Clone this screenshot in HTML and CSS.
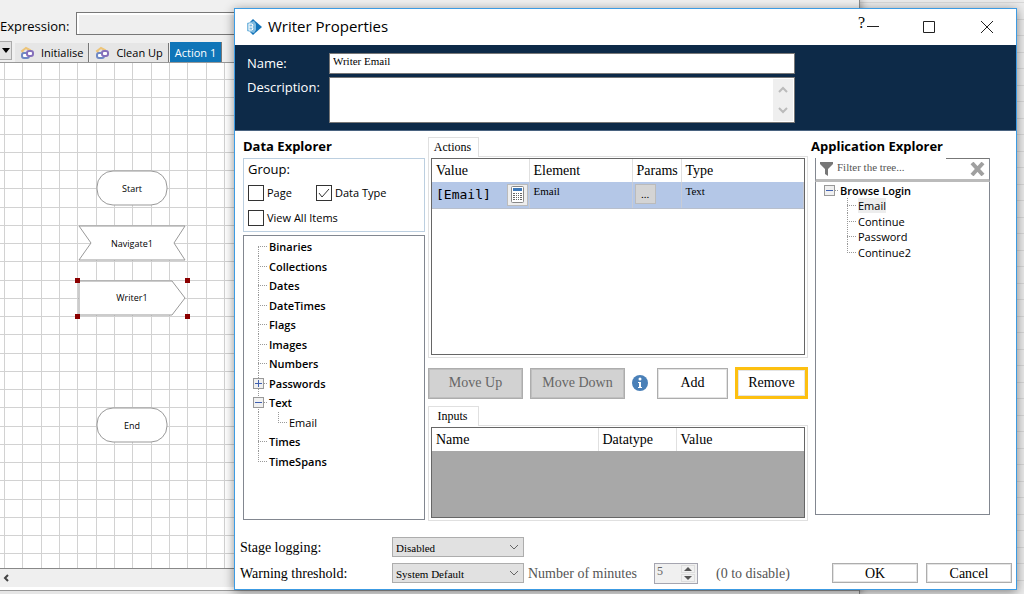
FILE: index.html
```html
<!DOCTYPE html>
<html lang="en">
<head>
  <meta charset="utf-8">
  <title>Writer Properties</title>
  <link rel="stylesheet" href="styles.css">
</head>
<body>
  <!-- Process studio behind the dialog -->
  <main class="studio">
    <div class="expression-bar">
      <label for="expression">Expression:</label>
      <input type="text" id="expression">
    </div>

    <div class="page-tabs">
      <button class="page-menu" aria-label="Pages"><svg width="8" height="5"><path d="M0 0h8L4 5z"/></svg></button>
      <button class="page-tab">
        <svg class="page-icon" width="15" height="14" viewBox="0 0 15 14" fill="none">
          <path d="M2 5l4-3 4 2-1 4-4 1z" stroke="#edc478" stroke-width="2"/>
          <rect x="2" y="7" width="7" height="5" rx="2" fill="#fff" stroke="#6f88c4" stroke-width="2"/>
          <rect x="7" y="5" width="6" height="5" rx="2" fill="#fff" stroke="#8570bb" stroke-width="2"/>
        </svg>
        Initialise
      </button>
      <button class="page-tab">
        <svg class="page-icon" width="15" height="14" viewBox="0 0 15 14" fill="none">
          <path d="M2 5l4-3 4 2-1 4-4 1z" stroke="#edc478" stroke-width="2"/>
          <rect x="2" y="7" width="7" height="5" rx="2" fill="#fff" stroke="#6f88c4" stroke-width="2"/>
          <rect x="7" y="5" width="6" height="5" rx="2" fill="#fff" stroke="#8570bb" stroke-width="2"/>
        </svg>
        Clean Up
      </button>
      <button class="page-tab active">Action 1</button>
    </div>

    <div class="canvas">
      <svg class="diagram" width="100%" height="100%">
        <defs>
          <pattern id="gridX" x="4" y="0" width="55" height="73" patternUnits="userSpaceOnUse">
            <path d="M0 0h1v73h-1zM18 0h1v73h-1zM37 0h1v73h-1z" fill="#d2d2d2"/>
          </pattern>
          <pattern id="gridY" x="0" y="16" width="55" height="73" patternUnits="userSpaceOnUse">
            <path d="M0 0h55v1h-55zM0 18h55v1h-55zM0 36h55v1h-55zM0 55h55v1h-55z" fill="#d2d2d2"/>
          </pattern>
        </defs>
        <rect width="100%" height="100%" fill="url(#gridX)"/>
        <rect width="100%" height="100%" fill="url(#gridY)"/>
        <g class="stage">
          <rect x="97" y="108" width="70" height="34" rx="16"/>
          <text x="132" y="129">Start</text>
        </g>
        <g class="stage">
          <path d="M79 163h106l-11 17 11 17H79l12-17z"/>
          <text x="132" y="184">Navigate1</text>
        </g>
        <g class="stage">
          <path d="M79 218h93l13 17-13 17H79z"/>
          <text x="132" y="238">Writer1</text>
        </g>
        <path class="handles" d="M75 215h5v5h-5zM185 215h5v5h-5zM75 251h5v5h-5zM185 251h5v5h-5z"/>
        <g class="stage">
          <rect x="97" y="345" width="70" height="34" rx="16"/>
          <text x="132" y="366">End</text>
        </g>
      </svg>
    </div>

    <div class="canvas-scroll">
      <button aria-label="Scroll left"><svg width="8" height="8" fill="none"><path d="M6 1L3 4l3 3" stroke="#444" stroke-width="2"/></svg></button>
    </div>
  </main>

  <section class="dialog" role="dialog" aria-labelledby="dialogTitle">
    <header class="title-bar">
      <svg class="app-icon" width="16" height="16" viewBox="0 0 16 16">
        <path d="M7 0l9 8-9 8-3-3V3z" fill="#1273b9"/>
        <path d="M1 4l7-2 2 3v6l-2 3-7-2z" fill="#7fbbe0"/>
        <path d="M3 5h3l1 1-1 2 1 2-1 1H3zM3 8h3" fill="none" stroke="#fff"/>
      </svg>
      <h1 id="dialogTitle">Writer Properties</h1>
      <button class="help-btn" aria-label="Help">?</button>
      <button class="window-btn minimise" aria-label="Minimise"><svg width="12" height="12"><path d="M0 5.5h12" /></svg></button>
      <button class="window-btn" aria-label="Maximise"><svg width="12" height="12"><path d="M.5.5h11v11H.5z"/></svg></button>
      <button class="window-btn" aria-label="Close"><svg width="12" height="12"><path d="M0 0l12 12M12 0L0 12"/></svg></button>
    </header>

    <div class="details">
      <label for="stageName">Name:</label>
      <input type="text" id="stageName" value="Writer Email">
      <label for="stageDesc">Description:</label>
      <div class="desc-box">
        <textarea id="stageDesc"></textarea>
        <div class="desc-scroll">
          <svg width="10" height="7"><path d="M1 6l4-4 4 4"/></svg>
          <svg width="10" height="7"><path d="M1 1l4 4 4-4"/></svg>
        </div>
      </div>
    </div>

    <div class="panels">
      <div class="data-explorer">
        <h2>Data Explorer</h2>
        <div class="group-box">
          <div class="group-title">Group:</div>
          <div class="group-row">
            <label class="page-check"><input type="checkbox">Page</label>
            <label><input type="checkbox" checked>Data Type</label>
          </div>
          <div class="group-row">
            <label><input type="checkbox">View All Items</label>
          </div>
        </div>
        <ul class="tree data-tree">
          <li><span class="branch first"></span>Binaries</li>
          <li><span class="branch"></span>Collections</li>
          <li><span class="branch"></span>Dates</li>
          <li><span class="branch"></span>DateTimes</li>
          <li><span class="branch"></span>Flags</li>
          <li><span class="branch"></span>Images</li>
          <li><span class="branch"></span>Numbers</li>
          <li><span class="branch"><button class="toggle plus" aria-label="Expand"></button></span>Passwords</li>
          <li><span class="branch"><button class="toggle" aria-label="Collapse"></button></span>Text</li>
          <li class="leaf"><span class="branch line"></span><span class="branch last"></span>Email</li>
          <li><span class="branch"></span>Times</li>
          <li><span class="branch last"></span>TimeSpans</li>
        </ul>
      </div>

      <div class="stage-panel">
        <button class="panel-tab">Actions</button>
        <div class="tab-body actions-body">
          <div class="grid-box">
            <table class="actions">
              <thead>
                <tr><th class="col-value">Value</th><th class="col-element">Element</th><th class="col-params">Params</th><th>Type</th></tr>
              </thead>
              <tbody>
                <tr>
                  <td>
                    <div class="value-cell">
                      <code>[Email]</code>
                      <button class="calc-btn" aria-label="Expression editor">
                        <svg width="13" height="17" viewBox="0 0 13 17">
                          <rect x=".5" y=".5" width="12" height="16" rx="1" fill="#fff" stroke="#888"/>
                          <path d="M2 2h9v3H2z" fill="#3d78b8"/>
                          <path d="M2 7h2v1H2zM5 7h1v1H5zM7 7h1v1H7zM9 7h2v1H9zM2 9h2v1H2zM5 9h1v1H5zM7 9h1v1H7zM9 9h2v1H9zM2 11h2v1H2zM5 11h1v1H5zM7 11h1v1H7zM9 11h2v1H9zM2 13h2v1H2zM5 13h1v1H5zM7 13h1v1H7zM9 13h2v1H9z" fill="#666"/>
                        </svg>
                      </button>
                    </div>
                  </td>
                  <td>Email</td>
                  <td class="params-cell"><button class="params-btn" aria-label="Edit params">...</button></td>
                  <td>Text</td>
                </tr>
              </tbody>
            </table>
          </div>
        </div>

        <div class="action-buttons">
          <button class="btn btn-wide" disabled>Move Up</button>
          <button class="btn btn-wide" disabled>Move Down</button>
          <svg class="info-icon" width="16" height="16" viewBox="0 0 16 16">
            <circle cx="8" cy="8" r="8" fill="#4a80b8"/>
            <circle cx="8" cy="4" r="1.5" fill="#fff"/>
            <path d="M6 7h3v5h1v1H6v-1h1V8H6z" fill="#fff"/>
          </svg>
          <button class="btn btn-add">Add</button>
          <button class="btn btn-remove">Remove</button>
        </div>

        <button class="panel-tab">Inputs</button>
        <div class="tab-body inputs-body">
          <div class="grid-box empty">
            <table class="inputs">
              <thead>
                <tr><th class="col-name">Name</th><th class="col-datatype">Datatype</th><th>Value</th></tr>
              </thead>
            </table>
          </div>
        </div>
      </div>

      <div class="app-explorer">
        <h2>Application Explorer</h2>
        <div class="filter">
          <svg width="13" height="14"><path d="M0 0h13v2L8 7v7l-3-2V7L0 2z" fill="#777"/></svg>
          <input type="text" placeholder="Filter the tree..." aria-label="Filter the tree">
          <button aria-label="Clear filter"><svg width="15" height="14"><path d="M2 1l11 12M13 1L2 13" stroke="#a0a0a0" stroke-width="4"/></svg></button>
        </div>
        <ul class="tree app-tree">
          <li><span class="branch root"><button class="toggle" aria-label="Collapse"></button></span>Browse Login</li>
          <li class="leaf"><span class="branch"></span><span class="selected">Email</span></li>
          <li class="leaf"><span class="branch"></span>Continue</li>
          <li class="leaf"><span class="branch"></span>Password</li>
          <li class="leaf"><span class="branch last"></span>Continue2</li>
        </ul>
      </div>
    </div>

    <footer class="settings">
      <div class="setting-row">
        <label class="setting-label" for="logging">Stage logging:</label>
        <select id="logging"><option>Disabled</option></select>
      </div>
      <div class="setting-row">
        <label class="setting-label" for="threshold">Warning threshold:</label>
        <select id="threshold"><option>System Default</option></select>
        <label class="minutes-label" for="minutes">Number of minutes</label>
        <div class="spinner">
          <input type="number" id="minutes" value="5" disabled>
          <div class="spinner-buttons">
            <button aria-label="More" disabled><svg width="8" height="4"><path d="M0 4h8L4 0z"/></svg></button>
            <button aria-label="Less" disabled><svg width="8" height="4"><path d="M0 0h8L4 4z"/></svg></button>
          </div>
        </div>
        <span class="minutes-hint">(0 to disable)</span>
        <div class="dialog-buttons">
          <button class="btn btn-dialog">OK</button>
          <button class="btn btn-dialog">Cancel</button>
        </div>
      </div>
    </footer>
  </section>
</body>
</html>
```

FILE: styles.css
```css
:root {
  --navy: #0d2a48;
  --accent: #0f75b8;
  --window-border: #3c9be3;
  --line: #828790;
  --soft-line: #e0e0e0;
  --sans: "Open Sans", "Noto Sans", sans-serif;
  --serif: "Liberation Serif", serif;
}

* {
  box-sizing: border-box;
}

body {
  margin: 0;
  height: 100vh;
  overflow: hidden;
  font-family: var(--sans);
  color: #000;
  background: repeating-linear-gradient(to bottom, #ececec 0 2px, #d8d8d8 2px 3px, #ececec 3px 19px, #d8d8d8 19px 20px, #ececec 20px 33px);
}

button,
input,
select,
textarea {
  font: inherit;
  color: inherit;
  margin: 0;
  padding: 0;
  border: 0;
  border-radius: 0;
  background: none;
  outline: none;
}

button svg {
  display: block;
}

/* process studio */

.studio {
  display: flex;
  flex-direction: column;
  width: 84%;
  height: 100%;
  padding-top: 12px;
  background: #f0f0f0;
  border-right: 1px solid #8a8a8a;
  box-shadow: 1px 0 8px rgba(0, 0, 0, 0.4);
}

.expression-bar {
  display: flex;
  align-items: center;
  gap: 5px;
  height: 22px;
  font-size: 14px;
}

.expression-bar label {
  width: 71px;
  padding-top: 6px;
  font-size: 13px;
}

.expression-bar input {
  flex: 1;
  height: 23px;
  background: #efefef;
  border: 1px solid #777;
  box-shadow: inset 2px 2px 0 #fff;
}

.page-tabs {
  display: flex;
  align-items: flex-end;
  margin-top: 7px;
  height: 22px;
  border-bottom: 1px solid #999;
  font-size: 11px;
}

.page-menu {
  display: flex;
  align-items: center;
  justify-content: center;
  align-self: flex-start;
  width: 12px;
  height: 19px;
  margin-right: 3px;
  background: #e2e2e2;
  border: 1px solid #aaa;
  border-left: 0;
}

.page-tab {
  display: flex;
  align-items: center;
  gap: 6px;
  height: 19px;
  padding: 0 5px;
  background: #e6e6e6;
  border-right: 1px solid #777;
  margin-right: 1px;
}

.page-tab.active {
  height: 20px;
  background: var(--accent);
  color: #fff;
}

.canvas {
  flex: 1;
  min-height: 0;
  background: #fff;
}

.diagram {
  display: block;
}

.stage rect,
.stage path {
  fill: #fff;
  stroke: #999;
}

.stage text {
  font-size: 9px;
  text-anchor: middle;
}

.handles {
  fill: #8b0000;
}

.canvas-scroll {
  display: flex;
  align-items: center;
  height: 26px;
  padding: 0 2px 8px;
  background: linear-gradient(#efefef 18px, #fff 18px 21px, #999 21px 22px, #e6e6e6 22px);
  border-top: 1px solid #888;
}

/* dialog window */

.dialog {
  position: absolute;
  inset: 8px 7px 4px 234px;
  display: flex;
  flex-direction: column;
  background: #fff;
  border: 1px solid var(--window-border);
  box-shadow: 0 2px 10px rgba(0, 0, 0, 0.45);
}

.title-bar {
  display: flex;
  align-items: center;
  height: 36px;
  padding-left: 11px;
}

.title-bar h1 {
  flex: 1;
  margin: 0 0 0 6px;
  font-size: 15px;
  font-weight: 400;
  line-height: 34px;
  align-self: flex-start;
}

.help-btn {
  align-self: flex-start;
  padding-top: 4px;
  font: 16px/20px var(--serif);
}

.window-btn {
  display: flex;
  justify-content: center;
  width: 58px;
}

.window-btn.minimise {
  justify-content: flex-start;
  width: 35px;
  padding-left: 2px;
}

.window-btn path {
  fill: none;
  stroke: #222;
}

.details {
  display: grid;
  grid-template-columns: 78px 1fr;
  gap: 3px 4px;
  padding: 8px 221px 7px 12px;
  background: var(--navy);
  border-bottom: 1px solid #4a6380;
  font-size: 13px;
}

.details label {
  color: #fff;
  line-height: 21px;
}

.details input {
  height: 21px;
  padding: 0 3px 5px;
  background: #fff;
  border: 1px solid #777;
  color: #000;
  font: 11px/15px var(--serif);
}

.desc-box {
  display: flex;
  height: 46px;
  background: #fff;
  border: 1px solid #777;
}

.desc-box textarea {
  flex: 1;
  resize: none;
}

.desc-scroll {
  display: flex;
  flex-direction: column;
  align-items: center;
  justify-content: space-between;
  width: 20px;
  margin: 1px;
  padding: 7px 0;
  background: #efefef;
}

.desc-scroll path {
  fill: none;
  stroke: #bbb;
  stroke-width: 2;
}

.panels {
  flex: 1;
  min-height: 0;
  display: grid;
  grid-template-columns: 182px 1fr 179px;
  column-gap: 3px;
  padding: 6px 26px 0 8px;
}

h2 {
  margin: 0;
  height: 21px;
  font-size: 13px;
  font-weight: 700;
  line-height: 19px;
  white-space: nowrap;
}

.data-explorer,
.stage-panel,
.app-explorer {
  display: flex;
  flex-direction: column;
  min-width: 0;
}

.group-box {
  height: 74px;
  padding: 0 4px;
  border: 1px solid #bccfe0;
  font-size: 11px;
}

.group-title {
  height: 21px;
  font-size: 13px;
  line-height: 20px;
}

.group-row {
  display: flex;
  height: 25px;
}

.group-row label {
  display: flex;
  align-items: center;
  gap: 3px;
}

.page-check {
  width: 68px;
}

input[type="checkbox"] {
  appearance: none;
  width: 16px;
  height: 16px;
  border: 1px solid #333;
  background: #fff;
}

input[type="checkbox"]:checked {
  background: url("data:image/svg+xml,%3Csvg xmlns='http://www.w3.org/2000/svg' viewBox='0 0 14 14'%3E%3Cpath d='M2 7l3 4 7-8' fill='none' stroke='%23333'/%3E%3C/svg%3E") center / 14px no-repeat;
}

/* trees */

.tree {
  margin: 0;
  padding: 0;
  list-style: none;
  font-size: 11px;
  font-weight: 600;
  background: #fff;
  border: 1px solid var(--line);
}

.tree li {
  display: flex;
  align-items: center;
}

.tree .leaf {
  font-weight: 400;
}

.data-tree {
  height: 285px;
  margin-top: 3px;
  padding: 1px 0 0 9px;
}

.data-tree li {
  height: 19px;
}

.data-tree li:nth-child(even) {
  height: 20px;
}

.app-tree {
  flex: 1;
  margin: 0 0 19px 4px;
  padding: 0 0 0 8px;
  border-top: 0;
}

.app-tree li {
  height: 16px;
}

.app-tree li:nth-child(even) {
  height: 15px;
}

.app-tree .leaf {
  padding-left: 18px;
}

.branch {
  display: flex;
  align-items: center;
  align-self: stretch;
  width: 16px;
  background:
    repeating-linear-gradient(to right, #999 0 1px, transparent 1px 2px) 5px 50% / 9px 1px no-repeat,
    repeating-linear-gradient(to bottom, #999 0 1px, transparent 1px 2px) 5px 0 / 1px 100% no-repeat;
}

.branch.first {
  background-position: 5px 50%, 5px 10px;
}

.branch.last {
  background-size: 9px 1px, 1px 50%;
}

.branch.line {
  width: 20px;
  background-size: 0 0, 1px 100%;
}

.branch.root {
  background-size: 9px 1px, 0 0;
}

.toggle {
  width: 11px;
  height: 11px;
  border: 1px solid #999;
  background: linear-gradient(#3f5fb0, #3f5fb0) center / 7px 1px no-repeat, #f0f0f0;
}

.toggle.plus {
  background: linear-gradient(#3f5fb0, #3f5fb0) center / 7px 1px no-repeat, linear-gradient(#3f5fb0, #3f5fb0) center / 1px 7px no-repeat, #f0f0f0;
}

.selected {
  background: #ededed;
  line-height: 15px;
}

/* actions and inputs */

.stage-panel {
  font-family: var(--serif);
  font-size: 14px;
}

.panel-tab {
  align-self: flex-start;
  width: 51px;
  height: 20px;
  margin-bottom: -1px;
  border: 1px solid var(--soft-line);
  border-bottom: 0;
  background: #fff;
  font-size: 12px;
  padding-right: 2px;
  position: relative;
}

.tab-body {
  padding: 1px 2px 2px;
  border: 1px solid var(--soft-line);
}

.actions-body {
  height: 202px;
}

.inputs-body {
  height: 96px;
}

.grid-box {
  height: 100%;
  border: 1px solid #666;
}

.grid-box.empty {
  background: #a8a8a8;
}

table {
  width: 100%;
  border-collapse: collapse;
  table-layout: fixed;
  background: #fff;
}

th {
  height: 23px;
  padding: 0 4px;
  border-right: 1px solid var(--soft-line);
  font-weight: 400;
  text-align: left;
}

th:last-child {
  border-right: 0;
}

.col-value {
  width: 97px;
}

.col-element {
  width: 103px;
}

.col-params {
  width: 49px;
}

.col-name {
  width: 166px;
}

.col-datatype {
  width: 78px;
}

.actions tbody {
  background: #b4c7e7;
}

td {
  height: 26px;
  padding: 0 4px;
  border-right: 1px solid #c8ccd6;
  border-bottom: 1px solid #b8bfcc;
  font-size: 11px;
  vertical-align: top;
  line-height: 18px;
}

.value-cell {
  display: flex;
  align-items: center;
  justify-content: space-between;
  margin-right: -3px;
  height: 25px;
}

code {
  font: 13px "DejaVu Sans Mono", monospace;
}

.calc-btn,
.params-btn {
  display: flex;
  align-items: center;
  justify-content: center;
  width: 21px;
  height: 22px;
  border: 1px solid #bbb;
  background: #eee;
}

td.params-cell {
  padding: 2px;
}

.params-btn {
  height: 20px;
  background: #d4d4d4;
}

.action-buttons {
  display: flex;
  align-items: center;
  height: 32px;
  margin: 9px 0 7px;
}

.btn {
  height: 31px;
  background: #fff;
  border: 1px solid #adadad;
  box-shadow: inset 0 0 0 1px #e4e4e4;
}

.btn:disabled {
  background: #d2d2d2;
  box-shadow: inset 0 0 0 1px #bfbfbf;
  color: #666;
}

.btn-wide {
  width: 95px;
  margin-right: 7px;
}

.btn-add {
  width: 71px;
  margin: 0 7px 0 9px;
}

.btn-remove {
  flex: 1;
  height: 32px;
  border: 3px solid #fdc010;
}

/* application explorer */

.filter {
  display: flex;
  align-items: center;
  height: 24px;
  margin-left: 4px;
  padding: 0 4px;
  border: 1px solid var(--line);
  border-top: 0;
  border-bottom: 3px solid #bbb;
  background: linear-gradient(#777, #777) right top / 43px 1px no-repeat;
}

.filter input {
  flex: 1;
  min-width: 0;
  padding: 0 0 3px 4px;
  font: 11px/16px var(--serif);
}

.filter input::placeholder {
  color: #555;
}

/* footer */

.settings {
  padding: 0 4px 3px 5px;
  font: 14px/20px var(--serif);
}

.setting-row {
  display: flex;
  align-items: center;
  height: 26px;
}

.setting-label {
  width: 152px;
  padding-top: 2px;
}

select {
  appearance: none;
  width: 132px;
  height: 20px;
  padding: 0 3px 2px;
  border: 1px solid #adadad;
  background: #e1e1e1 url("data:image/svg+xml,%3Csvg xmlns='http://www.w3.org/2000/svg' viewBox='0 0 10 6'%3E%3Cpath d='M1 1l4 4 4-4' fill='none' stroke='%23666'/%3E%3C/svg%3E") right 4px center / 10px 6px no-repeat;
  font-size: 11px;
}

.minutes-label {
  width: 130px;
  padding: 2px 0 0 4px;
  color: #555;
}

.spinner {
  display: flex;
  width: 44px;
  height: 21px;
  margin-right: 18px;
  border: 1px solid #a5a5b0;
  background: #f0f0f0;
  color: #666;
}

.spinner input {
  appearance: textfield;
  flex: 1;
  min-width: 0;
  height: 15px;
  padding: 0 2px;
  font-size: 12px;
  line-height: 15px;
}

.spinner input::-webkit-inner-spin-button {
  display: none;
}

.spinner-buttons {
  display: grid;
  gap: 1px;
  width: 14px;
  margin: 1px 2px;
}

.spinner-buttons button {
  display: flex;
  align-items: center;
  justify-content: center;
  border: 1px solid #ddd;
}

.spinner-buttons path {
  fill: #555;
}

.minutes-hint {
  padding-top: 2px;
  color: #555;
}

.dialog-buttons {
  display: flex;
  gap: 8px;
  margin-left: auto;
}

.btn-dialog {
  width: 86px;
  height: 20px;
}
```
